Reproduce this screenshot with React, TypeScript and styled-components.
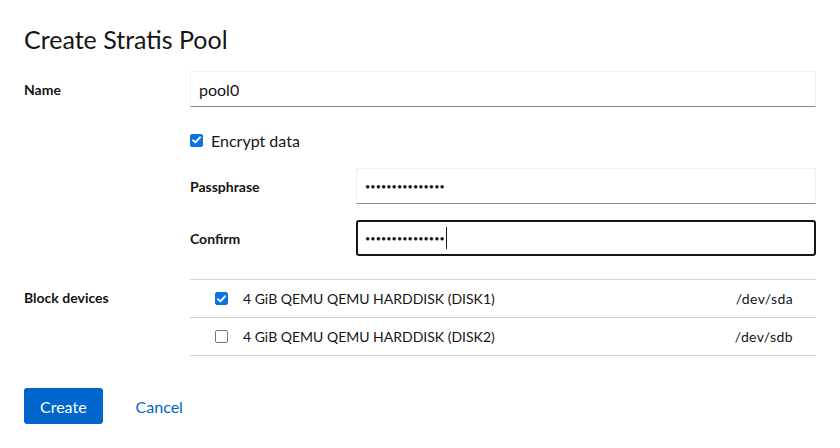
import React from "react";
import styled, { createGlobalStyle } from "styled-components";

const Global = createGlobalStyle`
  html, body { margin: 0; padding: 0; background: #fff; }
  body { font-family: Lato, "Noto Sans", sans-serif; color: #151515; }
  * { box-sizing: border-box; }
`;

const Page = styled.div`
  width: 840px;
  height: 448px;
  padding: 24px 24px 0 24px;
  display: flex;
  flex-direction: column;
`;

const Title = styled.h1`
  margin: 0 0 16px 0;
  font-size: 25px;
  line-height: 31px;
  font-weight: 400;
  color: #151515;
`;

const FormGrid = styled.div`
  display: grid;
  grid-template-columns: 150px 1fr;
  column-gap: 16px;
  align-items: center;
`;

const Label = styled.div<{ $top?: number }>`
  font-size: 14px;
  font-weight: 700;
  line-height: 21px;
  color: #151515;
  align-self: start;
  padding-top: ${(p) => p.$top ?? 8}px;
`;

const Field = styled.div<{ $focused?: boolean }>`
  height: 36px;
  display: flex;
  align-items: center;
  padding: 0 8px;
  font-size: 16px;
  color: #151515;
  background: #fff;
  border: 1px solid #f0f0f0;
  border-bottom-color: #8a8d90;
  ${(p) =>
    p.$focused &&
    `
    border: 2px solid #151515;
    border-radius: 3px;
    padding: 0 7px;
  `}
`;

const Dots = styled.span`
  font-size: 9px;
  letter-spacing: 0.1px;
  line-height: 1;
`;

const Caret = styled.span`
  display: inline-block;
  width: 1px;
  height: 22px;
  background: #151515;
  margin-left: 1px;
`;

const Cell = styled.div<{ $mt?: number }>`
  margin-top: ${(p) => p.$mt ?? 0}px;
`;

const CheckRow = styled.label`
  display: flex;
  align-items: center;
  gap: 8px;
  height: 24px;
  font-size: 16px;
  color: #151515;
`;

const Box = styled.span<{ $checked?: boolean }>`
  width: 13px;
  height: 13px;
  flex: none;
  border-radius: 2px;
  display: inline-flex;
  align-items: center;
  justify-content: center;
  background: ${(p) => (p.$checked ? "#0b73e6" : "#fff")};
  border: 1px solid ${(p) => (p.$checked ? "#0b73e6" : "#767676")};
`;

const SubGrid = styled.div`
  display: grid;
  grid-template-columns: 150px 1fr;
  column-gap: 16px;
  row-gap: 16px;
  align-items: center;
`;

const SubLabel = styled.div`
  font-size: 14px;
  font-weight: 700;
  color: #151515;
`;

const DeviceList = styled.ul`
  list-style: none;
  margin: 0;
  padding: 0;
  border-top: 1px solid #d2d2d2;
`;

const DeviceRow = styled.li`
  height: 38px;
  display: flex;
  align-items: center;
  padding: 0 23px 0 25px;
  border-bottom: 1px solid #d2d2d2;
  font-size: 14px;
  color: #151515;
`;

const DeviceName = styled.span`
  flex: 1;
  margin-left: 15px;
`;

const DevPath = styled.span`
  font-size: 14px;
  letter-spacing: 0.4px;
`;

const Actions = styled.div`
  display: flex;
  align-items: center;
  gap: 17px;
  margin-top: 32px;
`;

const PrimaryButton = styled.button`
  height: 36px;
  padding: 0 16px;
  background: #0066cc;
  color: #fff;
  border: none;
  border-radius: 3px;
  font-family: inherit;
  font-size: 16px;
`;

const LinkButton = styled.button`
  height: 36px;
  padding: 0 16px;
  background: transparent;
  color: #0066cc;
  border: none;
  font-family: inherit;
  font-size: 16px;
`;

const Check = ({ checked }: { checked?: boolean }) => (
  <Box $checked={checked}>
    {checked && (
      <svg width="9" height="8" viewBox="0 0 9 8">
        <path d="M1 4.2 L3.4 6.4 L8 1.3" stroke="#fff" strokeWidth="1.9" fill="none" strokeLinecap="round" strokeLinejoin="round" />
      </svg>
    )}
  </Box>
);

const devices = [
  { name: "4 GiB QEMU QEMU HARDDISK (DISK1)", path: "/dev/sda", checked: true },
  { name: "4 GiB QEMU QEMU HARDDISK (DISK2)", path: "/dev/sdb", checked: false },
];

const bullets = "•".repeat(15);

export default function App() {
  return (
    <>
      <Global />
      <Page>
        <Title>Create Stratis Pool</Title>
        <FormGrid>
          <Label>Name</Label>
          <Field>pool0</Field>

          <div />
          <Cell $mt={21}>
            <CheckRow>
              <Check checked />
              Encrypt data
            </CheckRow>
          </Cell>

          <div />
          <Cell $mt={16}>
            <SubGrid>
              <SubLabel>Passphrase</SubLabel>
              <Field>
                <Dots>{bullets}</Dots>
              </Field>
              <SubLabel>Confirm</SubLabel>
              <Field $focused>
                <Dots>{bullets}</Dots>
                <Caret />
              </Field>
            </SubGrid>
          </Cell>

          <Label $top={31}>Block devices</Label>
          <Cell $mt={23}>
            <DeviceList>
              {devices.map((d) => (
                <DeviceRow key={d.path}>
                  <Check checked={d.checked} />
                  <DeviceName>{d.name}</DeviceName>
                  <DevPath>{d.path}</DevPath>
                </DeviceRow>
              ))}
            </DeviceList>
          </Cell>
        </FormGrid>
        <Actions>
          <PrimaryButton>Create</PrimaryButton>
          <LinkButton>Cancel</LinkButton>
        </Actions>
      </Page>
    </>
  );
}
